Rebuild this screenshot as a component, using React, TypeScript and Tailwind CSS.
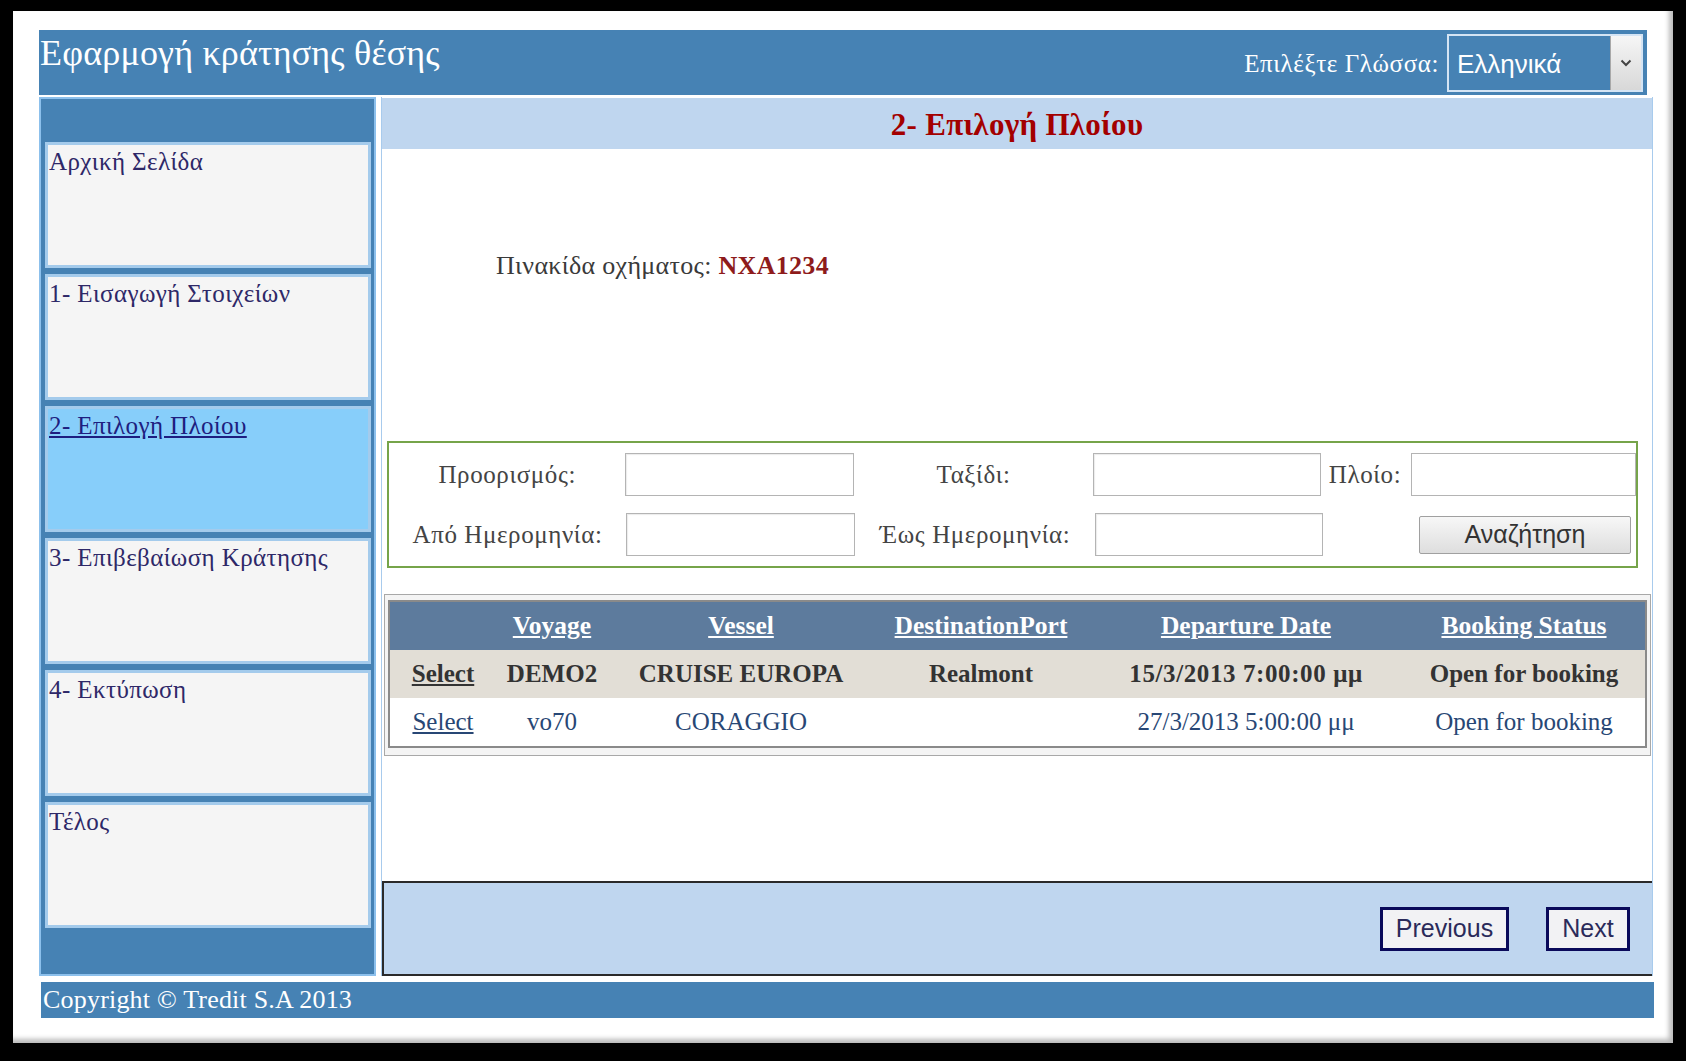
import React from "react";

const navItems = [
  "Αρχική Σελίδα",
  "1- Εισαγωγή Στοιχείων",
  "2- Επιλογή Πλοίου",
  "3- Επιβεβαίωση Κράτησης",
  "4- Εκτύπωση",
  "Τέλος",
];

function Input({ w }: { w: string }) {
  return <div className={`${w} h-[43px] bg-white border border-[#b4b4b4] shadow-[inset_1px_1px_1px_rgba(0,0,0,0.08)]`} />;
}

const cols = "grid grid-cols-[106px_112px_266px_214px_316px_240px] h-[48px] items-center text-center";

export default function App() {
  return (
    <div className="w-[1686px] h-[1061px] bg-black pt-[11px] pl-[13px] overflow-hidden font-['Liberation_Serif','Times_New_Roman',serif]">
      <div className="w-[1660px] h-[1032px] bg-white pt-[19px] pl-[26px] shadow-[inset_-4px_-4px_5px_rgba(0,0,0,0.28)]">
        {/* Header */}
        <div className="w-[1608px] h-[65px] bg-[#4682b4] flex items-start justify-between">
          <div className="text-white text-[36px] tracking-[0.2px] leading-none pt-[5px] pl-[1px]">Εφαρμογή κράτησης θέσης</div>
          <div className="flex items-center h-full pr-[4px]">
            <span className="text-white text-[25px] tracking-[0.6px] mr-[8px] mt-[3px]">Επιλέξτε Γλώσσα:</span>
            <div className="w-[196px] h-[58px] border-2 border-[#d4e4f4] bg-[#4682b4] flex items-center">
              <span className="flex-1 pl-[8px] pt-[3px] text-white text-[26px] font-['Liberation_Sans',Arial,sans-serif]">Ελληνικά</span>
              <div className="w-[31px] h-full bg-gradient-to-b from-[#f6f6f6] to-[#d8d8d8] border-l border-[#a8a8a8] flex items-center justify-center">
                <svg width="12" height="8" viewBox="0 0 12 8">
                  <path d="M1.5 1.5 L6 6 L10.5 1.5" fill="none" stroke="#444" strokeWidth="2" />
                </svg>
              </div>
            </div>
          </div>
        </div>

        {/* Body */}
        <div className="mt-[2px] flex h-[879px]">
          {/* Sidebar */}
          <div className="w-[337px] h-full bg-[#4682b4] border-2 border-[#8cc0ec] pt-[43px] pl-[4px] pr-[3px] flex flex-col gap-[6px]">
            {navItems.map((t, i) => (
              <div
                key={t}
                className={`h-[126px] border-[3px] border-[#a4cbec] pl-[1px] pt-[2px] text-[25px] tracking-[0.4px] leading-[30px] ${
                  i === 2 ? "bg-[#87cefa] text-[#1e1e80] underline" : "bg-[#f5f5f5] text-[#2e2868]"
                }`}
              >
                {t}
              </div>
            ))}
          </div>

          {/* Main */}
          <div className="ml-[5px] w-[1272px] h-full flex flex-col bg-white border-x border-[#a8cbed]">
            <div className="h-[51px] bg-[#bfd6ef] flex items-center justify-center pt-[3px] text-[#a30000] font-bold text-[31px] tracking-[0.3px] mt-[1px]">
              2- Επιλογή Πλοίου
            </div>

            <div className="h-[292px] pt-[102px] pl-[114px] text-[26px] tracking-[0.3px] leading-[30px] text-[#3a3a3a]">
              Πινακίδα οχήματος: <span className="font-bold text-[#8e1b1b]">NXA1234</span>
            </div>

            {/* Search fieldset */}
            <div className="ml-[5px] w-[1251px] h-[127px] border-2 border-[#76a44a] pt-[10px] text-[25px] tracking-[0.6px] text-[#444]">
              <div className="flex items-center h-[43px]">
                <div className="w-[237px] text-center">Προορισμός:</div>
                <Input w="w-[229px]" />
                <div className="w-[240px] text-center">Ταξίδι:</div>
                <Input w="w-[228px]" />
                <div className="w-[90px] pl-[8px]">Πλοίο:</div>
                <div className="relative z-10 w-[226px] h-[43px] bg-white border border-[#b4b4b4]" />
              </div>
              <div className="flex items-center h-[43px] mt-[17px]">
                <div className="w-[237px] text-center">Από Ημερομηνία:</div>
                <Input w="w-[229px]" />
                <div className="w-[240px] text-center">Έως Ημερομηνία:</div>
                <Input w="w-[228px]" />
                <div className="w-[96px]" />
                <div className="w-[212px] h-[38px] border border-[#a0a0a0] rounded-[2px] bg-gradient-to-b from-[#f7f7f7] to-[#dedede] flex items-center justify-center text-[25px] tracking-normal text-[#333] font-['Liberation_Sans',Arial,sans-serif]">
                  Αναζήτηση
                </div>
              </div>
            </div>

            {/* Grid */}
            <div className="ml-[2px] mt-[26px] w-[1267px] h-[162px] border border-[#a8a8a8] px-[3px] pt-[5px] bg-[#f4f4f4]">
              <div className="border-2 border-[#8a8a8a] bg-white text-[25px]">
                <div className={`${cols} bg-[#5d7b9d] text-white font-bold text-[25.5px]`}>
                  <div />
                  <div className="underline">Voyage</div>
                  <div className="underline">Vessel</div>
                  <div className="underline">DestinationPort</div>
                  <div className="underline">Departure Date</div>
                  <div className="underline">Booking Status</div>
                </div>
                <div className={`${cols} bg-[#e2ded6] text-[#333] font-bold`}>
                  <div className="underline">Select</div>
                  <div>DEMO2</div>
                  <div>CRUISE EUROPA</div>
                  <div>Realmont</div>
                  <div className="tracking-[0.6px]">15/3/2013 7:00:00 μμ</div>
                  <div>Open for booking</div>
                </div>
                <div className={`${cols} bg-white text-[#284775]`}>
                  <div className="underline">Select</div>
                  <div>vo70</div>
                  <div>CORAGGIO</div>
                  <div />
                  <div>27/3/2013 5:00:00 μμ</div>
                  <div>Open for booking</div>
                </div>
              </div>
            </div>

            {/* Nav bar */}
            <div className="mt-auto h-[95px] bg-[#bfd6ef] border-y-2 border-l-2 border-[#2a2a2a] flex items-center justify-end pr-[22px] gap-[37px] font-['Liberation_Sans',Arial,sans-serif] text-[25px] text-[#2a2a5a]">
              <div className="w-[129px] h-[44px] border-[3px] border-[#0a0a5a] bg-[#f2f2f4] flex items-center justify-center">Previous</div>
              <div className="w-[84px] h-[44px] border-[3px] border-[#0a0a5a] bg-[#f2f2f4] flex items-center justify-center">Next</div>
            </div>
          </div>
        </div>

        {/* Footer */}
        <div className="mt-[6px] ml-[2px] w-[1613px] h-[36px] bg-[#4682b4] text-white text-[26px] tracking-[0.2px] leading-[36px] pl-[2px]">
          Copyright © Tredit S.A 2013
        </div>
      </div>
    </div>
  );
}
